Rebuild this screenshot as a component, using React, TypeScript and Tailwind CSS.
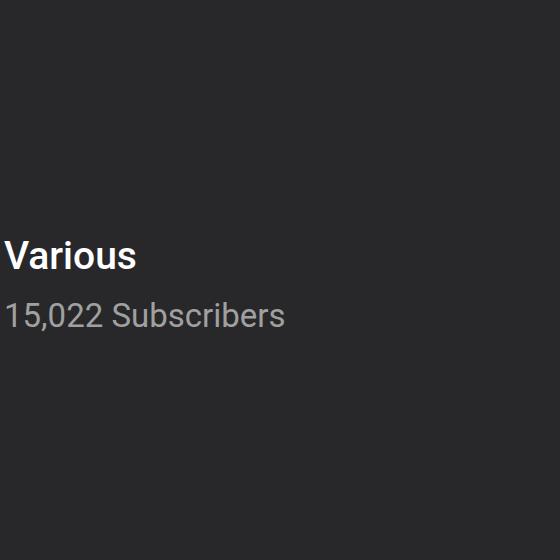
export default function App() {
  return (
    <div className="w-[560px] h-[560px] bg-[#28282a] flex flex-col pt-[234px] px-[4px] font-['Roboto',sans-serif]">
      <div className="flex flex-col gap-[18px]">
        <h1 className="text-[39px] leading-[44px] font-medium text-white">Various</h1>
        <p className="text-[33px] leading-[40px] text-[#a0a0a0]">15,022 Subscribers</p>
      </div>
    </div>
  );
}
